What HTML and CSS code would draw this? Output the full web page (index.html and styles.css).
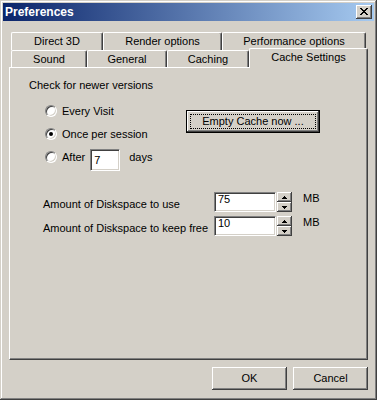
FILE: index.html
```html
<!DOCTYPE html>
<html>
<head>
<meta charset="utf-8">
<link rel="stylesheet" href="styles.css">
</head>
<body>
<div class="window">
  <div class="titlebar">
    <span class="title">Preferences</span>
    <div class="close">
      <svg width="8" height="7" viewBox="0 0 8 7"><path d="M0 0h2v1H0zM6 0h2v1H6zM1 1h2v1H1zM5 1h2v1H5zM2 2h4v1H2zM3 3h2v1H3zM2 4h4v1H2zM1 5h2v1H1zM5 5h2v1H5zM0 6h2v1H0zM6 6h2v1H6z" fill="#000"/></svg>
    </div>
  </div>
  <div class="tabs">
    <div class="tabrow">
      <div class="tab t-d3d">Direct 3D</div>
      <div class="tab t-render">Render options</div>
      <div class="tab t-perf">Performance options</div>
    </div>
    <div class="tabrow">
      <div class="tab t-sound">Sound</div>
      <div class="tab t-general">General</div>
      <div class="tab t-caching">Caching</div>
      <div class="tab t-cache active">Cache Settings</div>
    </div>
  </div>
  <div class="panel">
    <div class="heading">Check for newer versions</div>
    <div class="check">
      <div class="radios">
        <div class="radio-row"><span class="radio"></span><span>Every Visit</span></div>
        <div class="radio-row"><span class="radio on"></span><span>Once per session</span></div>
        <div class="radio-row row3"><span class="radio"></span><span>After</span><span class="field days-field">7</span><span class="days">days</span></div>
      </div>
      <div class="btn default"><span class="focus">Empty Cache now ...</span></div>
    </div>
    <div class="disk">
      <div class="disk-row">
        <span class="disk-label">Amount of Diskspace to use</span>
        <span class="field num">75</span>
        <span class="spin"><span class="sb up"><svg width="5" height="3" viewBox="0 0 5 3"><path d="M2 0h1v1h1v1h1v1H0V2h1V1h1z" fill="#000"/></svg></span><span class="sb down"><svg width="5" height="3" viewBox="0 0 5 3"><path d="M0 0h5v1H4v1H3v1H2V2H1V1H0z" fill="#000"/></svg></span></span>
        <span class="mb">MB</span>
      </div>
      <div class="disk-row">
        <span class="disk-label">Amount of Diskspace to keep free</span>
        <span class="field num">10</span>
        <span class="spin"><span class="sb up"><svg width="5" height="3" viewBox="0 0 5 3"><path d="M2 0h1v1h1v1h1v1H0V2h1V1h1z" fill="#000"/></svg></span><span class="sb down"><svg width="5" height="3" viewBox="0 0 5 3"><path d="M0 0h5v1H4v1H3v1H2V2H1V1H0z" fill="#000"/></svg></span></span>
        <span class="mb">MB</span>
      </div>
    </div>
  </div>
  <div class="buttons">
    <div class="btn plain">OK</div>
    <div class="btn plain">Cancel</div>
  </div>
</div>
</body>
</html>
```

FILE: styles.css
```css
html, body {
  margin: 0;
  padding: 0;
  background: #d4d0c8;
}
body {
  font-family: "Liberation Sans", Arial, sans-serif;
  font-size: 11px;
  color: #000;
}
.window {
  width: 377px;
  height: 400px;
  box-sizing: border-box;
  padding: 3px;
  background: #d4d0c8;
  box-shadow: inset -1px -1px #404040, inset 1px 1px #d4d0c8, inset -2px -2px #808080, inset 2px 2px #fff;
  display: flex;
  flex-direction: column;
}
.titlebar {
  height: 18px;
  display: flex;
  align-items: center;
  justify-content: space-between;
  background: linear-gradient(to right, #0a246a, #a6caf0);
  padding-left: 2px;
}
.title {
  color: #fff;
  font-weight: bold;
  font-size: 12px;
  line-height: 14px;
}
.close {
  width: 16px;
  height: 14px;
  margin-right: 2px;
  box-sizing: border-box;
  background: #d4d0c8;
  box-shadow: inset -1px -1px #404040, inset 1px 1px #fff, inset -2px -2px #808080, inset 2px 2px #d4d0c8;
  display: flex;
  align-items: center;
  justify-content: center;
  padding: 0 0 1px 0;
}
.close svg { display: block; }
.tabs {
  margin-top: 11px;
  margin-left: 8px;
}
.tabrow {
  display: flex;
}
.tabrow:first-child { height: 18px; }
.tabrow:last-child { height: 17px; }
.tab {
  box-sizing: border-box;
  height: 100%;
  border-left: 1px solid #fff;
  border-top: 1px solid #fff;
  border-right: 1px solid #404040;
  border-radius: 2px 2px 0 0;
  box-shadow: inset -1px 0 #808080;
  display: flex;
  align-items: center;
  justify-content: center;
  line-height: 13px;
  background: #d4d0c8;
}
.t-d3d { width: 92px; }
.t-render { width: 119px; }
.t-perf { width: 144px; }
.t-sound { width: 76px; }
.t-general { width: 80px; }
.t-caching { width: 82px; }
.t-cache { width: 119px; }
.tab.active {
  position: relative;
  top: -2px;
  height: 20px;
  z-index: 1;
  padding-bottom: 3px;
}
.panel {
  margin-left: 6px;
  width: 359px;
  height: 293px;
  box-sizing: border-box;
  border: 1px solid;
  border-color: #fff #404040 #404040 #fff;
  box-shadow: inset -1px -1px #808080;
  padding: 10px 0 0 19px;
}
.heading {
  line-height: 14px;
}
.check {
  display: flex;
  margin-top: 7px;
}
.radios {
  width: 141px;
  padding-left: 16px;
}
.radio-row {
  height: 23px;
  display: flex;
  align-items: center;
}
.radio-row.row3 { height: 24px; }
.radio {
  width: 12px;
  height: 12px;
  box-sizing: border-box;
  border-radius: 50%;
  background: #fff;
  border: 1px solid;
  border-color: #808080 #fff #fff #808080;
  box-shadow: inset 1px 1px #404040, inset -1px -1px #d4d0c8;
  position: relative;
  margin-right: 5px;
  flex: none;
}
.radio.on::after {
  content: "";
  position: absolute;
  left: 3px;
  top: 3px;
  width: 4px;
  height: 4px;
  border-radius: 50%;
  background: #000;
}
.field {
  box-sizing: border-box;
  background: #fff;
  border: 1px solid;
  border-color: #808080 #fff #fff #808080;
  box-shadow: inset 1px 1px #404040, inset -1px -1px #d4d0c8;
  padding-left: 3px;
}
.days-field {
  width: 30px;
  height: 22px;
  margin-left: 5px;
  margin-top: 6px;
  line-height: 20px;
}
.days { margin-left: 9px; }
.btn {
  box-sizing: border-box;
  background: #d4d0c8;
  display: flex;
  align-items: center;
  justify-content: center;
}
.btn.default {
  width: 134px;
  height: 23px;
  margin-top: 11px;
  border: 1px solid #000;
  box-shadow: inset -1px -1px #404040, inset 1px 1px #fff, inset -2px -2px #808080, inset 2px 2px #d4d0c8;
  padding: 3px;
}
.focus {
  flex: 1;
  align-self: stretch;
  border: 1px dotted #000;
  display: flex;
  align-items: center;
  justify-content: center;
  line-height: 13px;
}
.disk {
  margin-top: 23px;
  margin-left: 14px;
}
.disk-row {
  height: 24px;
  display: flex;
  align-items: flex-start;
}
.disk-label {
  width: 171px;
  margin-top: 6px;
  line-height: 13px;
}
.num {
  width: 62px;
  height: 20px;
  line-height: 9px;
  padding-top: 2px;
}
.spin {
  margin-left: 1px;
  width: 15px;
  display: flex;
  flex-direction: column;
}
.sb {
  height: 10px;
  box-sizing: border-box;
  box-shadow: inset -1px -1px #404040, inset 1px 1px #fff, inset -2px -2px #808080;
  display: flex;
  align-items: center;
  justify-content: center;
}
.sb svg { display: block; }
.mb {
  margin-left: 11px;
  line-height: 13px;
}
.buttons {
  margin-top: 7px;
  padding-right: 6px;
  display: flex;
  justify-content: flex-end;
  gap: 6px;
}
.btn.plain {
  width: 75px;
  height: 23px;
  box-shadow: inset -1px -1px #404040, inset 1px 1px #fff, inset -2px -2px #808080, inset 2px 2px #d4d0c8;
  line-height: 13px;
}
```
